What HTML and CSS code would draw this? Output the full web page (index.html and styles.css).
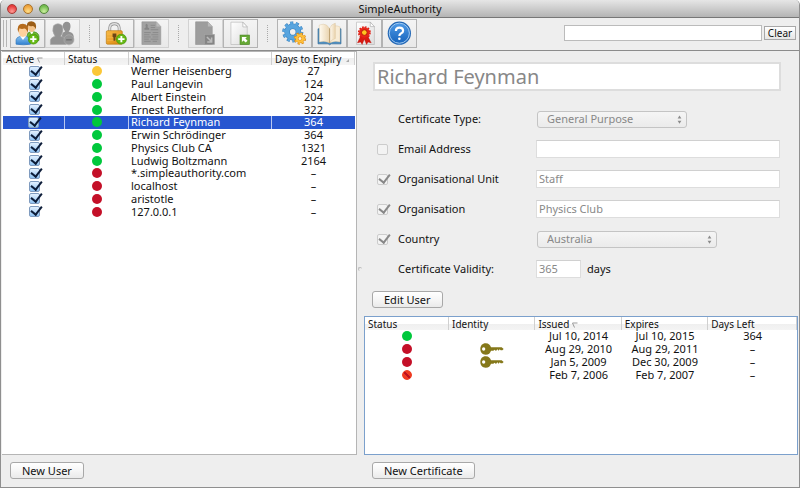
FILE: index.html
```html
<!DOCTYPE html>
<html lang="en">
<head>
<meta charset="utf-8">
<title>SimpleAuthority</title>
<link rel="stylesheet" href="styles.css">
</head>
<body>
<svg class="defs" width="0" height="0" aria-hidden="true">
  <defs>
    <linearGradient id="blue" x1="0" y1="0" x2="0" y2="1"><stop offset="0" stop-color="#8cc4f0"/><stop offset="1" stop-color="#2f7fd0"/></linearGradient>
    <linearGradient id="help" x1="0" y1="0" x2="0" y2="1"><stop offset="0" stop-color="#4f9ae6"/><stop offset="1" stop-color="#1664bd"/></linearGradient>
    <linearGradient id="gold" x1="0" y1="0" x2="1" y2="1"><stop offset="0" stop-color="#f9bb45"/><stop offset="1" stop-color="#d8830c"/></linearGradient>
    <linearGradient id="page" x1="0" y1="0" x2="1" y2="1"><stop offset="0" stop-color="#ffffff"/><stop offset="1" stop-color="#dddddd"/></linearGradient>
    <linearGradient id="leaf" x1="0" y1="0" x2="1" y2="0"><stop offset="0" stop-color="#fffaf0"/><stop offset="1" stop-color="#e9d3ae"/></linearGradient>
    <symbol id="plus" viewBox="0 0 36 36">
      <circle cx="18" cy="18" r="16" fill="#66b814" stroke="#3f8f06" stroke-width="2"/>
      <path d="M18 8v20M8 18h20" stroke="#fff" stroke-width="6"/>
    </symbol>
    <symbol id="key" viewBox="0 0 72 36">
      <path fill="#85781a" fill-rule="evenodd" d="M17 1C26 1 31 6 33 13H65L71 18L67 22H62L59 19L56 23L52 19L48 24L44 20L40 23H33C31 30 26 35 17 35C7 35 1 28 1 18S7 1 17 1ZM11 13A5 5 0 1 0 11 23A5 5 0 0 0 11 13Z"/>
    </symbol>
    <symbol id="steppers" viewBox="0 0 12 24">
      <path d="M6 1L11 9H1ZM6 23L1 15H11Z" fill="#8b8b8b"/>
    </symbol>
  </defs>
</svg>

<div class="window">
  <header class="titlebar">
    <div class="lights"><span class="light light-close"></span><span class="light light-min"></span><span class="light light-zoom"></span></div>
    <h1 class="title">SimpleAuthority</h1>
  </header>

  <div class="toolbar">
    <span class="grip"></span>
    <div class="tools">
      <button class="tool" type="button" aria-label="Add user">
        <svg viewBox="0 0 105 84">
          <path d="M51 62V48Q52 38 64 36Q86 36 89 50V64Z" fill="#6fb935" stroke="#41831b" stroke-width="2"/>
          <path d="M60 36L66 46L72 36Z" fill="#fff"/>
          <ellipse cx="66" cy="22" rx="12" ry="15" fill="#f4c48b"/>
          <path d="M52 26Q46 3 65 3Q84 4 79 30Q76 18 68 18Q60 20 56 16Z" fill="#9b5d16"/>
          <path d="M16 76V62Q18 53 30 51H46Q60 53 62 64V76Q40 80 16 76Z" fill="url(#blue)" stroke="#3476b9" stroke-width="2"/>
          <path d="M29 50L38 63L48 50Z" fill="#fff"/>
          <ellipse cx="38" cy="35" rx="14" ry="18" fill="#ffd19d"/>
          <path d="M23 39Q16 11 38 11Q60 12 53 41Q51 28 43 26Q33 29 27 25Z" fill="#b56b1c"/>
          <use href="#plus" x="53" y="42" width="36" height="36"/>
        </svg>
      </button>
      <button class="tool" type="button" aria-label="Remove user" disabled>
        <svg viewBox="0 0 105 84" fill="#929292">
          <path d="M51 60V48Q52 38 61 36Q49 20 56 9Q66 0 76 9Q82 22 72 36Q86 39 88 50V60Z"/>
          <path d="M14 77V63Q16 54 29 51Q17 34 24 17Q38 5 52 17Q58 34 47 51Q62 54 64 64V77Z" stroke="#a9a9a9" stroke-width="2"/>
          <circle cx="73" cy="62" r="16" fill="#969696" stroke="#b0b0b0" stroke-width="2"/>
          <path d="M64 62h18" stroke="#777" stroke-width="5"/>
        </svg>
      </button>
      <span class="divider"></span>
      <button class="tool" type="button" aria-label="New certificate">
        <svg viewBox="0 0 105 84">
          <path d="M31 36V24Q32 11 46 11T61 24V36" fill="none" stroke="#8c8c8c" stroke-width="9"/>
          <path d="M31 36V24Q32 11 46 11T61 24V36" fill="none" stroke="#dedede" stroke-width="5"/>
          <rect x="20" y="33" width="51" height="43" rx="4" fill="url(#gold)" stroke="#b9760d" stroke-width="2"/>
          <path d="M23 44H68M23 54H68M23 64H68" stroke="#ffd077" stroke-width="2" opacity=".5"/>
          <path d="M40 42H52V52L49 55V65H43V55L40 52Z" fill="#6b4616"/>
          <use href="#plus" x="50" y="42" width="36" height="36"/>
        </svg>
      </button>
      <button class="tool" type="button" aria-label="View certificate" disabled>
        <svg viewBox="0 0 105 84">
          <path d="M22 5H68L82 20V77H22Z" fill="#a2a2a2" stroke="#959595" stroke-width="2"/>
          <path d="M68 5V20H82Z" fill="#bbb"/>
          <path d="M30 30V25L35 22Q31 14 37 11Q43 14 40 22L45 25V30Z" fill="#858585"/>
          <path d="M50 16H64M50 23H64M50 30H74M29 39H50M56 39H74M29 46H46M52 46H74M29 53H50M56 53H74M29 60H44M50 60H74M29 67H50M56 67H70" stroke="#8a8a8a" stroke-width="3"/>
        </svg>
      </button>
      <span class="divider"></span>
      <button class="tool" type="button" aria-label="Export" disabled>
        <svg viewBox="0 0 105 84">
          <path d="M21 5H60L74 20V77H21Z" fill="#9d9d9d" stroke="#949494" stroke-width="2"/>
          <path d="M60 5V20H74Z" fill="#b9b9b9"/>
          <rect x="49" y="45" width="32" height="32" fill="#858585" stroke="#a5a5a5" stroke-width="2"/>
          <path d="M57 53L70 66M72 55V69H58" fill="none" stroke="#bbb" stroke-width="5"/>
        </svg>
      </button>
      <button class="tool" type="button" aria-label="Import">
        <svg viewBox="0 0 105 84">
          <path d="M22 6H60L74 21V77H22Z" fill="url(#page)" stroke="#b5b5b5" stroke-width="2"/>
          <path d="M60 6V21H74Z" fill="#fff" stroke="#aaa" stroke-width="2"/>
          <rect x="51" y="47" width="30" height="30" fill="#65a934" stroke="#468221" stroke-width="2"/>
          <path d="M57 53H73L68 58L75 65L69 71L62 64L57 69Z" fill="#fff"/>
        </svg>
      </button>
      <span class="divider"></span>
      <button class="tool" type="button" aria-label="Settings">
        <svg viewBox="0 0 105 84">
          <circle cx="47" cy="37" r="28" fill="none" stroke="#3b82be" stroke-width="11" pathLength="20" stroke-dasharray="1.1 .9"/>
          <circle cx="47" cy="37" r="18" fill="none" stroke="#3b82be" stroke-width="18"/>
          <circle cx="47" cy="37" r="18" fill="none" stroke="#58a5df" stroke-width="14"/>
          <circle cx="47" cy="37" r="28" fill="none" stroke="#58a5df" stroke-width="8" pathLength="20" stroke-dasharray=".9 1.1"/>
          <circle cx="70" cy="58" r="15" fill="none" stroke="#d88212" stroke-width="9" pathLength="16" stroke-dasharray="1.1 .9"/>
          <circle cx="70" cy="58" r="10" fill="#fff0d0" stroke="#d88212" stroke-width="10"/>
          <circle cx="70" cy="58" r="10" fill="none" stroke="#ffc13b" stroke-width="7"/>
          <circle cx="70" cy="58" r="15" fill="none" stroke="#ffc13b" stroke-width="5" pathLength="16" stroke-dasharray=".8 1.2"/>
        </svg>
      </button>
      <button class="tool" type="button" aria-label="Address book">
        <svg viewBox="0 0 105 84">
          <path d="M16 27H89V75H58L53 78L48 75H16Z" fill="#4a8dc2" stroke="#2c648f" stroke-width="2"/>
          <path d="M20 15Q34 10 43 15L53 26V72Q38 64 20 69Z" fill="url(#leaf)" stroke="#d0b180" stroke-width="1"/>
          <path d="M53 26Q68 12 86 21V69Q68 64 53 72Z" fill="#f8ecd6" stroke="#d0b180" stroke-width="1"/>
          <path d="M53 26Q58 12 71 9V58Q58 61 53 72Z" fill="url(#leaf)" stroke="#d0b180" stroke-width="1"/>
          <path d="M53 26V72" stroke="#a98041" stroke-width="2"/>
        </svg>
      </button>
      <button class="tool" type="button" aria-label="Certificates">
        <svg viewBox="0 0 105 84">
          <path d="M27 6H71L84 20V77H27Z" fill="url(#page)" stroke="#b5b5b5" stroke-width="2"/>
          <path d="M71 6V20H84Z" fill="#fff" stroke="#aaa" stroke-width="2"/>
          <path d="M40 50L30 72L40 69L45 77L52 60L59 77L64 69L74 72L63 50Z" fill="#d81a12" stroke="#a80d08" stroke-width="1"/>
          <circle cx="52" cy="39" r="17" fill="#e9261a"/>
          <circle cx="52" cy="39" r="18" fill="none" stroke="#df1d12" stroke-width="5" pathLength="24" stroke-dasharray="1.2 .8"/>
          <circle cx="52" cy="39" r="9" fill="#ffc620" stroke="#b3140a" stroke-width="3"/>
        </svg>
      </button>
      <button class="tool" type="button" aria-label="Help">
        <svg viewBox="0 0 105 84">
          <circle cx="52" cy="41" r="37" fill="#2267b5"/>
          <circle cx="52" cy="41" r="32" fill="url(#help)" stroke="#a9d0f5" stroke-width="3"/>
          <path d="M41 34Q41 23 52 23Q64 23 64 33Q64 39 57 42Q52 45 52 50" fill="none" stroke="#fff" stroke-width="7"/>
          <circle cx="52" cy="59" r="4" fill="#fff"/>
        </svg>
      </button>
    </div>
    <input class="field search" type="text" aria-label="Search">
    <button class="clear" type="button">Clear</button>
  </div>

  <main class="panes">
    <section class="pane users">
      <div class="list">
        <table class="grid users-grid">
          <colgroup><col class="c-active"><col class="c-status"><col><col class="c-days"></colgroup>
          <thead><tr>
            <th>Active <svg class="sort" viewBox="0 0 12 12"><path d="M11 2H1L5 11" fill="none" stroke="#999" stroke-width="2"/></svg></th>
            <th>Status</th><th>Name</th>
            <th>Days to Expiry <svg class="sort" viewBox="0 0 12 12"><path d="M4 10L10 4V10Z" fill="#aaa"/></svg></th>
          </tr></thead>
          <tbody>
            <tr><td><input class="tick" type="checkbox" checked aria-label="Werner Heisenberg active"></td><td><span class="dot amber"></span></td><td class="name">Werner Heisenberg</td><td>27</td></tr>
            <tr><td><input class="tick" type="checkbox" checked aria-label="Paul Langevin active"></td><td><span class="dot green"></span></td><td class="name">Paul Langevin</td><td>124</td></tr>
            <tr><td><input class="tick" type="checkbox" checked aria-label="Albert Einstein active"></td><td><span class="dot green"></span></td><td class="name">Albert Einstein</td><td>204</td></tr>
            <tr><td><input class="tick" type="checkbox" checked aria-label="Ernest Rutherford active"></td><td><span class="dot green"></span></td><td class="name">Ernest Rutherford</td><td>322</td></tr>
            <tr class="selected"><td><input class="tick" type="checkbox" checked aria-label="Richard Feynman active"></td><td><span class="dot green"></span></td><td class="name">Richard Feynman</td><td>364</td></tr>
            <tr><td><input class="tick" type="checkbox" checked aria-label="Erwin Schrödinger active"></td><td><span class="dot green"></span></td><td class="name">Erwin Schrödinger</td><td>364</td></tr>
            <tr><td><input class="tick" type="checkbox" checked aria-label="Physics Club CA active"></td><td><span class="dot green"></span></td><td class="name">Physics Club CA</td><td>1321</td></tr>
            <tr><td><input class="tick" type="checkbox" checked aria-label="Ludwig Boltzmann active"></td><td><span class="dot green"></span></td><td class="name">Ludwig Boltzmann</td><td>2164</td></tr>
            <tr><td><input class="tick" type="checkbox" checked aria-label="*.simpleauthority.com active"></td><td><span class="dot red"></span></td><td class="name">*.simpleauthority.com</td><td>–</td></tr>
            <tr><td><input class="tick" type="checkbox" checked aria-label="localhost active"></td><td><span class="dot red"></span></td><td class="name">localhost</td><td>–</td></tr>
            <tr><td><input class="tick" type="checkbox" checked aria-label="aristotle active"></td><td><span class="dot red"></span></td><td class="name">aristotle</td><td>–</td></tr>
            <tr><td><input class="tick" type="checkbox" checked aria-label="127.0.0.1 active"></td><td><span class="dot red"></span></td><td class="name">127.0.0.1</td><td>–</td></tr>
          </tbody>
        </table>
      </div>
      <div class="actions"><button class="push" type="button">New User</button></div>
    </section>

    <div class="splitter"><span class="splitter-knob"></span></div>

    <section class="pane details">
      <form class="form">
        <input class="field full-name" type="text" value="Richard Feynman" aria-label="Name" disabled>
        <div class="form-rows">
          <span></span>
          <label for="type">Certificate Type:</label>
          <span class="picker"><select id="type" disabled><option>General Purpose</option></select><svg class="steppers"><use href="#steppers"/></svg></span>

          <input class="tick" type="checkbox" id="use-email" aria-label="Include email address" disabled>
          <label for="email">Email Address</label>
          <input class="field" type="text" id="email" disabled>

          <input class="tick" type="checkbox" id="use-unit" aria-label="Include organisational unit" checked disabled>
          <label for="unit">Organisational Unit</label>
          <input class="field" type="text" id="unit" value="Staff" disabled>

          <input class="tick" type="checkbox" id="use-org" aria-label="Include organisation" checked disabled>
          <label for="org">Organisation</label>
          <input class="field" type="text" id="org" value="Physics Club" disabled>

          <input class="tick" type="checkbox" id="use-country" aria-label="Include country" checked disabled>
          <label for="country">Country</label>
          <span class="picker picker-wide"><select id="country" disabled><option>Australia</option></select><svg class="steppers"><use href="#steppers"/></svg></span>

          <span></span>
          <label for="validity">Certificate Validity:</label>
          <span class="validity"><input class="field" type="text" id="validity" value="365" disabled><span>days</span></span>
        </div>
        <button class="push" type="button">Edit User</button>
      </form>
      <div class="list list-focus">
        <table class="grid certs-grid">
          <colgroup><col class="c-cert-status"><col class="c-cert"><col class="c-cert"><col class="c-cert"><col></colgroup>
          <thead><tr>
            <th>Status</th><th>Identity</th>
            <th>Issued <svg class="sort" viewBox="0 0 12 12"><path d="M11 2H1L5 11" fill="none" stroke="#999" stroke-width="2"/></svg></th>
            <th>Expires</th><th>Days Left</th>
          </tr></thead>
          <tbody>
            <tr><td><span class="dot green"></span></td><td></td><td>Jul 10, 2014</td><td>Jul 10, 2015</td><td>364</td></tr>
            <tr><td><span class="dot red"></span></td><td><svg class="key"><use href="#key"/></svg></td><td>Aug 29, 2010</td><td>Aug 29, 2011</td><td>–</td></tr>
            <tr><td><span class="dot red"></span></td><td><svg class="key"><use href="#key"/></svg></td><td>Jan 5, 2009</td><td>Dec 30, 2009</td><td>–</td></tr>
            <tr><td><span class="dot revoked"></span></td><td></td><td>Feb 7, 2006</td><td>Feb 7, 2007</td><td>–</td></tr>
          </tbody>
        </table>
      </div>
      <div class="actions"><button class="push" type="button">New Certificate</button></div>
    </section>
  </main>
</div>
</body>
</html>
```
FILE: styles.css
```css
* { box-sizing: border-box; }

body {
  margin: 0;
  background: #fff;
  color: #111;
  font: 11px/12px "Noto Sans", "Open Sans", sans-serif;
}

button, input, select { font: inherit; color: inherit; margin: 0; }
.defs { position: absolute; }

.window {
  display: flex;
  flex-direction: column;
  min-height: calc(100vh - 1px);
  background: #eee;
  border: 1px solid #8f8f8f;
  border-top: 0;
  border-radius: 5px 5px 0 0;
}

/* Title bar */
.titlebar {
  display: grid;
  grid-template-columns: 1fr auto 1fr;
  align-items: center;
  height: 18px;
  padding: 0 6px;
  background: linear-gradient(#e6e6e6, #b4b4b4);
  border-bottom: 1px solid #777;
  border-radius: 5px 5px 0 0;
}
.lights { display: flex; gap: 6px; }
.light {
  width: 10px;
  height: 10px;
  border: 1px solid #777;
  border-radius: 50%;
}
.light-close { background: radial-gradient(circle at 50% 80%, #ff9c96, #e63c3c 70%); border-color: #a83a35; }
.light-min { background: radial-gradient(circle at 50% 80%, #ffe08a, #eea33c 70%); border-color: #a9722b; }
.light-zoom { background: radial-gradient(circle at 50% 80%, #cdf0a0, #72bc4e 70%); border-color: #56853d; }
.title { margin: 0; font-size: 11px; font-weight: 400; }

/* Toolbar */
.toolbar {
  display: flex;
  align-items: center;
  height: 33px;
  padding: 0 3px 2px 2px;
  border-bottom: 1px solid #8c8c8c;
}
.grip {
  width: 4px;
  height: 27px;
  margin-right: 3px;
  border: solid #b5b5b5;
  border-width: 0 1px;
}
.tools { display: flex; align-items: center; flex: 1; }
.tool {
  width: 35px;
  height: 29px;
  padding: 0;
  background: linear-gradient(#f4f4f4, #e9e9e9);
  border: 1px solid #b3b3b3;
}
.tool:disabled { border-color: #d2d2d2; }
.tool svg { display: block; width: 100%; height: 100%; }
.divider {
  height: 17px;
  width: 1px;
  margin: 0 9px;
  border-left: 1px dotted #aaa;
}

.field {
  width: 100%;
  height: 18px;
  padding: 0 2px 1px;
  background: #fff;
  border: 1px solid #ddd;
  border-top-color: #d0d0d0;
  outline: 0;
}
.field:disabled { color: #888; }
.search { width: 25%; height: 16px; border-color: #bbb; }
.clear {
  width: 32px;
  height: 14px;
  margin-left: 2px;
  padding: 0;
  background: linear-gradient(#fff, #e6e6e6);
  border: 1px solid #a8a8a8;
  font-size: 10px;
  line-height: 12px;
}

/* Panes */
.panes { display: flex; flex: 1; }
.pane { display: flex; flex-direction: column; min-width: 0; }
.users { flex: 356; }
.details { flex: 435; }
.splitter { display: flex; align-items: center; width: 7px; }
.splitter-knob {
  width: 4px;
  height: 4px;
  margin-left: 1px;
  border: solid #bbb;
  border-width: 1px 0 0 1px;
  border-radius: 50%;
}
.list { flex: 1; margin-left: 1px; padding: 0 1px; background: #fff; border: solid #b5b5b5; border-width: 1px 1px 1px 0; }
.list-focus { margin: 0 1px 0 0; padding: 0; border: 1px solid #7ba0cc; }
.actions { padding: 7px 9px 8px; }
.details .actions { padding-left: 8px; }

.push {
  display: block;
  height: 17px;
  padding: 0 11px;
  background: linear-gradient(#fff, #f6f6f6 50%, #eaeaea);
  border: 1px solid #a8a8a8;
  border-radius: 3px;
  line-height: 14px;
}

/* Tables */
.grid { width: 100%; border-collapse: separate; border-spacing: 0; table-layout: fixed; }
.users-grid { height: 166px; }
.certs-grid { height: 64px; }
.c-active { width: 62px; }
.c-status { width: 64px; }
.c-days { width: 83px; }
.c-cert-status { width: 84px; }
.c-cert { width: 20%; }
.grid th {
  height: 13px;
  padding: 0 3px;
  background: linear-gradient(#fff 50%, #efefef 50%, #f4f4f4);
  border-right: 1px solid #d0d0d0;
  font-size: 10px;
  font-weight: 400;
  line-height: 12px;
  text-align: left;
  white-space: nowrap;
}
.grid td { padding: 0; text-align: center; line-height: 12px; white-space: nowrap; }
.grid td.name { padding-left: 2px; text-align: left; }
.selected { background: #2756d0; color: #fff; }
.selected td { border-right: 1px solid #b9c8f0; }
.selected td:last-child { border-right: 0; }
.sort { width: 6px; height: 6px; }

.dot { display: block; width: 10px; height: 10px; margin: 0 auto; border-radius: 50%; }
.green { background: #00c83c; }
.amber { background: #fbc737; }
.red { background: #c41028; }
.revoked { background: linear-gradient(45deg, #f03a20 40%, #bd1020 40% 60%, #f03a20 60%); border: 1px solid #ee3b22; }
.key { display: block; width: 24px; height: 12px; margin: 0 auto; }

/* Tick boxes */
.tick {
  appearance: none;
  display: block;
  width: 11px;
  height: 11px;
  background: linear-gradient(#e3f1ff, #8fc3f3);
  border: 1px solid #7f9bbf;
  border-radius: 2px;
}
td .tick { margin: 0 auto; }
.tick:checked::after {
  content: "";
  display: block;
  width: 5px;
  height: 9px;
  margin: -3px 0 0 3px;
  border: solid #0c1c38;
  border-width: 0 2px 2px 0;
  transform: rotate(38deg);
}
.tick:disabled { background: #f3f3f3; border-color: #ccc; }
.tick:disabled::after { border-color: #888; }

/* Detail form */
.form { padding: 11px 19px 8px 8px; }
.form .push { margin-top: 7px; }
.full-name { height: 29px; padding: 0 2px; border-width: 2px; border-color: #ddd; font-size: 20px; margin-left: 1px; }
.form-rows {
  display: grid;
  grid-template-columns: 11px 128px 1fr;
  grid-auto-rows: 30px;
  column-gap: 10px;
  align-items: center;
  margin-top: 13px;
  padding-left: 5px;
}
.picker {
  position: relative;
  width: 150px;
  margin-left: 1px;
}
.picker-wide { width: 180px; }
.picker select {
  appearance: none;
  display: block;
  width: 100%;
  height: 17px;
  padding: 0 9px;
  background: linear-gradient(#f5f5f5, #ebebeb);
  border: 1px solid #c4c4c4;
  border-radius: 3px;
  color: #888;
  opacity: 1;
}
.steppers { position: absolute; top: 4px; right: 5px; width: 5px; height: 9px; }
.validity { display: flex; align-items: center; gap: 6px; }
.validity .field { width: 45px; }
```
